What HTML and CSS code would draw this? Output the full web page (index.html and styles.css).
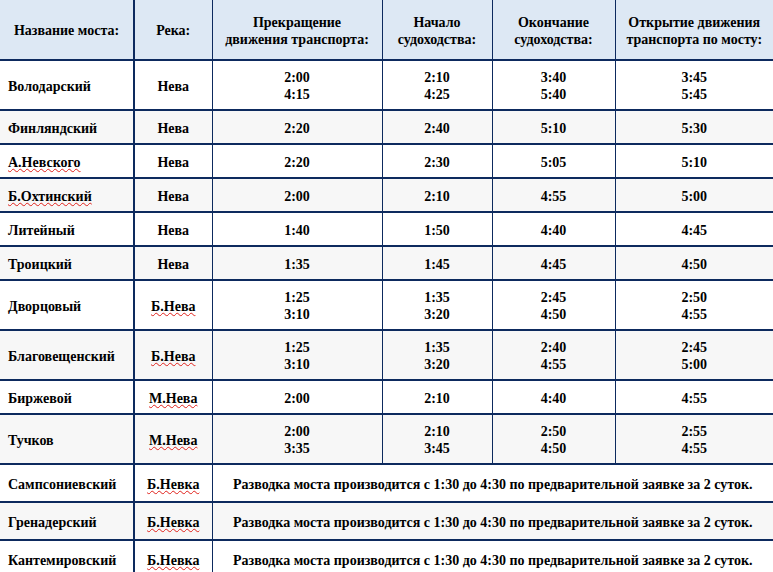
FILE: index.html
```html
<!DOCTYPE html>
<html lang="ru">
<head>
<meta charset="utf-8">
<title>Разводка мостов</title>
<link rel="stylesheet" href="styles.css">
</head>
<body>
<table class="bridges">
  <colgroup>
    <col class="c1"><col class="c2"><col class="c3"><col class="c4"><col class="c5"><col class="c6">
  </colgroup>
  <thead>
    <tr class="head">
      <th class="name">Название моста:</th>
      <th class="river">Река:</th>
      <th>Прекращение<br>движения транспорта:</th>
      <th>Начало<br>судоходства:</th>
      <th>Окончание<br>судоходства:</th>
      <th>Открытие движения<br>транспорта по мосту:</th>
    </tr>
  </thead>
  <tbody>
    <tr class="tall"><td class="name">Володарский</td><td class="river">Нева</td><td>2:00<br>4:15</td><td>2:10<br>4:25</td><td>3:40<br>5:40</td><td>3:45<br>5:45</td></tr>
    <tr class="alt"><td class="name">Финляндский</td><td class="river">Нева</td><td>2:20</td><td>2:40</td><td>5:10</td><td>5:30</td></tr>
    <tr><td class="name"><span class="spell">А.Невского</span></td><td class="river">Нева</td><td>2:20</td><td>2:30</td><td>5:05</td><td>5:10</td></tr>
    <tr class="alt"><td class="name"><span class="spell">Б.Охтинский</span></td><td class="river">Нева</td><td>2:00</td><td>2:10</td><td>4:55</td><td>5:00</td></tr>
    <tr><td class="name">Литейный</td><td class="river">Нева</td><td>1:40</td><td>1:50</td><td>4:40</td><td>4:45</td></tr>
    <tr class="alt"><td class="name">Троицкий</td><td class="river">Нева</td><td>1:35</td><td>1:45</td><td>4:45</td><td>4:50</td></tr>
    <tr class="tall"><td class="name">Дворцовый</td><td class="river"><span class="spell">Б.Нева</span></td><td>1:25<br>3:10</td><td>1:35<br>3:20</td><td>2:45<br>4:50</td><td>2:50<br>4:55</td></tr>
    <tr class="tall alt"><td class="name">Благовещенский</td><td class="river"><span class="spell">Б.Нева</span></td><td>1:25<br>3:10</td><td>1:35<br>3:20</td><td>2:40<br>4:55</td><td>2:45<br>5:00</td></tr>
    <tr><td class="name">Биржевой</td><td class="river"><span class="spell">М.Нева</span></td><td>2:00</td><td>2:10</td><td>4:40</td><td>4:55</td></tr>
    <tr class="tall alt"><td class="name">Тучков</td><td class="river"><span class="spell">М.Нева</span></td><td>2:00<br>3:35</td><td>2:10<br>3:45</td><td>2:50<br>4:50</td><td>2:55<br>4:55</td></tr>
    <tr class="mid"><td class="name">Сампсониевский</td><td class="river"><span class="spell">Б.Невка</span></td><td colspan="4">Разводка моста производится с 1:30 до 4:30 по предварительной заявке за 2 суток.</td></tr>
    <tr class="mid alt"><td class="name">Гренадерский</td><td class="river"><span class="spell">Б.Невка</span></td><td colspan="4">Разводка моста производится с 1:30 до 4:30 по предварительной заявке за 2 суток.</td></tr>
    <tr class="mid"><td class="name">Кантемировский</td><td class="river"><span class="spell">Б.Невка</span></td><td colspan="4">Разводка моста производится с 1:30 до 4:30 по предварительной заявке за 2 суток.</td></tr>
  </tbody>
</table>
</body>
</html>
```
FILE: styles.css
```css
html, body {
  margin: 0;
  padding: 0;
  background: #ffffff;
}

.bridges {
  width: 773px;
  table-layout: fixed;
  border-collapse: collapse;
  font-family: "Liberation Serif", "Times New Roman", serif;
  font-weight: bold;
  font-size: 14px;
  line-height: 17px;
  color: #000;
}

.c1 { width: 134px; }
.c2 { width: 78px; }
.c3 { width: 170px; }
.c4 { width: 110px; }
.c5 { width: 123px; }
.c6 { width: 158px; }

.bridges th,
.bridges td {
  padding: 2px 2px 0;
  text-align: center;
  vertical-align: middle;
  border-bottom: 2px solid #0d2a5e;
  border-right: 1px solid #0d2a5e;
  font-weight: bold;
}

.bridges th:last-child,
.bridges td:last-child {
  border-right: none;
}

.bridges .name {
  text-align: left;
  padding-left: 8px;
  border-right: 2px solid #0d2a5e;
}

.head th {
  background: #dde8f4;
  height: 57px;
}

.bridges th.name {
  text-align: center;
  padding-left: 2px;
}

.bridges tbody tr { height: 34px; }
.bridges tbody tr.tall { height: 50px; }
.bridges tbody tr.mid { height: 38px; }

.bridges tr.alt td { background: #f7f7f7; }

.spell {
  text-decoration: underline wavy #e0201a;
  text-decoration-thickness: 1px;
  text-underline-offset: 1px;
}
```
